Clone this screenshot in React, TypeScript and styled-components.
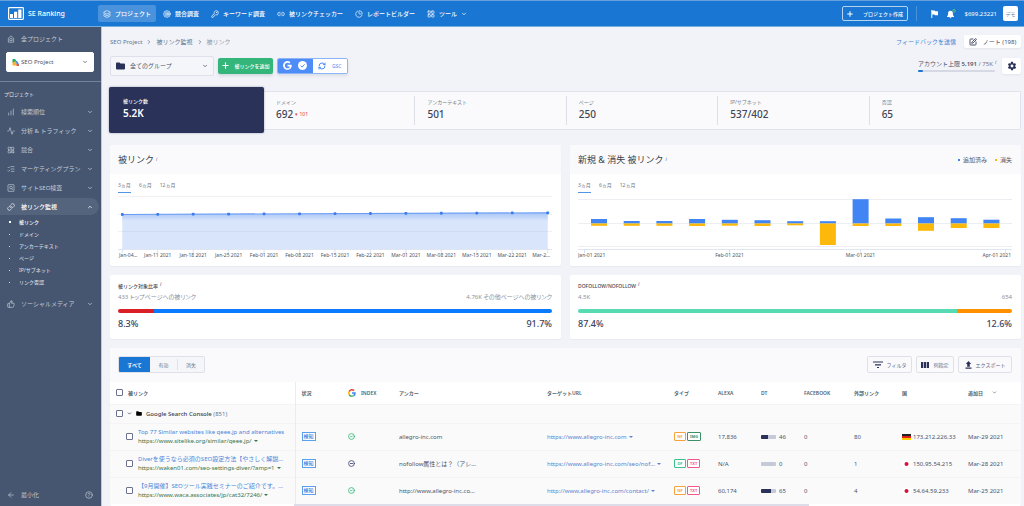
import React from 'react';
import styled, { createGlobalStyle, css } from 'styled-components';
import {
  Layers, Target, Link as LinkIcon, PieChart, LayoutGrid, ChevronDown, ChevronUp, ChevronRight, Plus,
  KeyRound, ChartNoAxesColumnIncreasing, Activity, ListChecks, Link2, ThumbsUp, ArrowLeft, CircleHelp,
  RefreshCw, SquarePen, CircleCheck, CircleMinus, Atom,
} from 'lucide-react';

const Global = createGlobalStyle`
  *, *::before, *::after { box-sizing: border-box; }
  body {
    margin: 0;
    background: #f2f3f8;
    color: #4a5468;
    font: 6px/8px "Noto Sans", "Noto Sans CJK JP", sans-serif;
  }
  button, input, select { font: inherit; color: inherit; margin: 0; padding: 0; }
  button { cursor: pointer; border: 0; background: none; }
  a { color: inherit; text-decoration: none; }
  ul { list-style: none; margin: 0; padding: 0; }
  h1, h2, h3, p, dl, dd, dt { margin: 0; font-weight: 400; }
  svg { flex: none; display: block; }
`;

/* ---------- top bar ---------- */
const TopBar = styled.header`
  display: flex;
  align-items: center;
  height: 27px;
  padding: 0 6px 0 8px;
  background: #1976d2;
  border-top: 1px solid #65a0dc;
  border-bottom: 1px solid #75acde;
  color: #fff;
`;
const Brand = styled.a`
  display: flex;
  align-items: center;
  gap: 4px;
  width: 90px;
  font-size: 7px;
  font-weight: 500;
`;
const TopNav = styled.nav`
  display: flex;
  gap: 2px;
  flex: 1;
`;
const TopLink = styled.a<{ $active?: boolean }>`
  display: flex;
  align-items: center;
  gap: 4px;
  height: 17px;
  padding: 0 5px;
  border-radius: 2px;
  white-space: nowrap;
  font-weight: 500;
  background: ${p => (p.$active ? '#4a92dc' : 'transparent')};
`;
const CreateButton = styled.button`
  display: flex;
  align-items: center;
  justify-content: center;
  gap: 9px;
  width: 66px;
  height: 15px;
  border: 1px solid #b6d3f1;
  border-radius: 2px;
  color: #fff;
  font-size: 5px;
  font-weight: 500;
`;
const TopTools = styled.div`
  display: flex;
  align-items: center;
  gap: 9px;
  height: 15px;
  margin-left: 8px;
  padding-left: 14px;
  border-left: 1px solid #4d92d9;
`;
const Avatar = styled.button`
  width: 15px;
  height: 15px;
  margin-left: -3px;
  border-radius: 2px;
  background: #fff;
  color: #5d86b5;
  font-size: 5px;
`;
const IconButton = styled.button`
  color: #fff;
`;

/* ---------- side bar ---------- */
const Shell = styled.div`
  display: flex;
  min-height: calc(100vh - 27px);
`;
const Side = styled.aside`
  display: flex;
  flex-direction: column;
  flex: 0 0 102px;
  background: #465670;
  border-right: 1px solid #c3c8d2;
  color: #c4cbd6;
`;
const SideTop = styled.div`
  display: flex;
  flex-direction: column;
  gap: 9px;
  padding: 8px 7px 9px 6px;
  border-bottom: 1px solid #74819a;
`;
const AllProjects = styled.a`
  display: flex;
  align-items: center;
  gap: 6px;
  padding-left: 1px;
`;
const SelectBox = styled.label<{ $w?: number; $soft?: boolean }>`
  display: flex;
  align-items: center;
  gap: ${p => (p.$soft ? 5 : 2)}px;
  height: 20px;
  width: ${p => (p.$w ? `${p.$w}px` : 'auto')};
  padding: 0 5px;
  border-radius: 2px;
  background: ${p => (p.$soft ? '#f5f6fa' : '#fff')};
  border: 1px solid ${p => (p.$soft ? '#dfe1ea' : '#fff')};
  color: #4a5468;
  select {
    flex: 1;
    min-width: 0;
    appearance: none;
    border: 0;
    outline: 0;
    background: transparent;
  }
`;
const SideLabel = styled.h2`
  padding: 8px 4px 5px;
  font-size: 5px;
  color: #e3e7ee;
`;
const SideItem = styled.button<{ $active?: boolean }>`
  display: flex;
  align-items: center;
  gap: 6px;
  width: 99px;
  height: 17px;
  margin-bottom: 2px;
  padding: 0 6px 0 7px;
  border-radius: 0 9px 9px 0;
  text-align: left;
  white-space: nowrap;
  background: ${p => (p.$active ? '#55647d' : 'transparent')};
  color: ${p => (p.$active ? '#fff' : 'inherit')};
  font-weight: ${p => (p.$active ? 500 : 400)};
  span { flex: 1; }
`;
const SubList = styled.ul`
  margin: -1px 0 7px;
`;
const SubItem = styled.li<{ $active?: boolean }>`
  display: flex;
  align-items: center;
  gap: 8px;
  height: 12px;
  padding-left: 9px;
  font-size: 5px;
  font-weight: 500;
  color: ${p => (p.$active ? '#fff' : '#d3d8e0')};
  &::before {
    content: '';
    width: ${p => (p.$active ? 2 : 1)}px;
    height: ${p => (p.$active ? 2 : 1)}px;
    margin-right: ${p => (p.$active ? 0 : 1)}px;
    background: currentColor;
  }
`;
const SideFoot = styled.div`
  display: flex;
  align-items: center;
  justify-content: space-between;
  margin-top: auto;
  padding: 7px 8px 7px 7px;
  button { display: flex; align-items: center; gap: 6px; }
`;

/* ---------- content head ---------- */
const Main = styled.main`
  flex: 1;
  min-width: 0;
  display: flex;
  flex-direction: column;
  padding: 8px 3px 0 8px;
`;
const HeadRow = styled.div<{ $h: number }>`
  display: flex;
  align-items: center;
  justify-content: space-between;
  height: ${p => p.$h}px;
`;
const Crumbs = styled.nav`
  display: flex;
  align-items: center;
  gap: 4px;
  color: #5d7390;
  > :last-child { color: #8c98a6; }
`;
const Cluster = styled.div<{ $gap: number }>`
  display: flex;
  align-items: center;
  gap: ${p => p.$gap}px;
`;
const Feedback = styled.a`
  color: #3a86d4;
`;
const WhiteButton = styled.button<{ $w: number; $h: number }>`
  display: flex;
  align-items: center;
  justify-content: center;
  gap: 6px;
  width: ${p => p.$w}px;
  height: ${p => p.$h}px;
  border-radius: 2px;
  background: #fff;
  box-shadow: 0 1px 2px rgba(40, 50, 90, 0.08);
`;
const GreenButton = styled.button`
  display: flex;
  align-items: center;
  justify-content: center;
  gap: 4px;
  width: 55px;
  height: 16px;
  border-radius: 2px;
  background: #34b67a;
  color: #fff;
  font-size: 5px;
  font-weight: 500;
  white-space: nowrap;
  box-shadow: 0 2px 3px rgba(40, 50, 90, 0.14);
`;
const GscGroup = styled.div`
  display: flex;
  width: 71px;
  height: 16px;
  border: 1px solid #8db4f8;
  border-radius: 2px;
  overflow: hidden;
  background: #fff;
  box-shadow: 0 2px 3px rgba(40, 50, 90, 0.1);
`;
const GscButton = styled.button<{ $on?: boolean }>`
  display: flex;
  flex: 1;
  align-items: center;
  justify-content: center;
  gap: 6px;
  background: ${p => (p.$on ? '#4e8cf8' : '#fff')};
  color: ${p => (p.$on ? '#fff' : '#4e8cf8')};
  font-size: 5px;
`;
const Limit = styled.div`
  display: flex;
  flex-direction: column;
  gap: 2px;
  width: 80px;
  white-space: nowrap;
  b { font-weight: 600; }
  small { font-size: 6px; color: #6e7686; }
`;
const Track = styled.div`
  width: 77px;
  height: 2px;
  border-radius: 1px;
  background: #d6d8e3;
`;
const Fill = styled.div`
  height: 100%;
  border-radius: 1px;
  background: #1976d2;
`;
const Info = styled.sup`
  margin-left: 2px;
  font-size: 5px;
  line-height: 5px;
  font-style: italic;
  vertical-align: 2px;
  color: #5d7390;
`;

/* ---------- metric strip ---------- */
const Metrics = styled.dl`
  display: flex;
  align-items: center;
  margin: 4px 0 12px -1px;
`;
const LeadMetric = styled.div`
  flex: 0 0 155px;
  height: 46px;
  padding: 10px 14px;
  border-radius: 2px;
  background: #2b3259;
  color: #fff;
  box-shadow: 0 0 2px rgba(43, 50, 89, 0.5);
  z-index: 1;
`;
const MetricStrip = styled.div`
  display: flex;
  flex: 1;
  height: 39px;
  padding: 4px 0;
  border: 1px solid #e1e3ec;
  border-left: 0;
  border-radius: 0 2px 2px 0;
  background: #fafafc;
`;
const MetricCell = styled.div`
  flex: 1;
  padding: 2px 0 0 12px;
  & + & { border-left: 1px solid #dcdee8; }
`;
const MetricName = styled.dt<{ $lead?: boolean }>`
  font-size: 5px;
  line-height: 8px;
  font-weight: ${p => (p.$lead ? 500 : 400)};
  color: ${p => (p.$lead ? '#fff' : '#737b88')};
`;
const MetricValue = styled.dd<{ $lead?: boolean }>`
  font-size: 10px;
  line-height: 16px;
  font-weight: ${p => (p.$lead ? 600 : 500)};
  color: ${p => (p.$lead ? '#fff' : '#3f4654')};
  small {
    margin-left: 2px;
    font-size: 5px;
    font-weight: 400;
    vertical-align: 2px;
    color: #e0393e;
  }
`;

/* ---------- cards ---------- */
const CardGrid = styled.div`
  display: grid;
  grid-template-columns: 1fr 1fr;
  gap: 9px;
  margin-bottom: 9px;
`;
const Card = styled.section`
  min-width: 0;
  border-radius: 2px;
  background: #fff;
  overflow: hidden;
  box-shadow: 0 1px 1px rgba(40, 50, 90, 0.05);
`;
const CardHead = styled.div`
  display: flex;
  align-items: center;
  justify-content: space-between;
  height: 29px;
  padding: 0 9px 0 8px;
  background: #fafafc;
`;
const CardTitle = styled.h2`
  font-size: 9px;
  line-height: 12px;
  color: #3a3f4a;
`;
const LegendItem = styled.span<{ $c: string }>`
  display: flex;
  align-items: center;
  gap: 3px;
  &::before {
    content: '';
    width: 2px;
    height: 2px;
    background: ${p => p.$c};
  }
`;
const Periods = styled.div`
  display: flex;
  gap: 8px;
  height: 19px;
  padding: 6px 8px 0;
`;
const Period = styled.button<{ $active?: boolean }>`
  height: 13px;
  padding-bottom: 3px;
  font-size: 5px;
  border-bottom: 1px solid ${p => (p.$active ? '#4f95e2' : 'transparent')};
  color: #6e7686;
`;
const Plot = styled.svg`
  width: calc(100% - 17px);
  height: auto;
  margin: 0 9px 4px 8px;
`;

const RatioCard = styled(Card)`
  display: flex;
  flex-direction: column;
  height: 64px;
  padding: 6px 9px 0 8px;
`;
const RatioTitle = styled.h3`
  font-size: 5px;
  line-height: 10px;
  font-weight: 500;
  color: #3f4654;
`;
const Spread = styled.div<{ $big?: boolean }>`
  display: flex;
  justify-content: space-between;
  ${p => p.$big
    ? css`font-size: 9px; line-height: 12px; font-weight: 500; color: #394260;`
    : css`font-size: 6px; line-height: 12px; color: #8a919d; font-feature-settings: 'palt';`}
`;
const RatioBar = styled.div`
  display: flex;
  height: 4px;
  margin: 6px 0 5px;
  border-radius: 2px;
  overflow: hidden;
`;
const RatioPart = styled.div<{ $c: string }>`
  background: ${p => p.$c};
`;

/* ---------- table ---------- */
const TableCard = styled(Card)`
  flex: 1;
`;
const TableTools = styled.div`
  display: flex;
  align-items: center;
  justify-content: space-between;
  height: 34px;
  padding: 0 9px 1px 8px;
  background: #fafafc;
`;
const Segments = styled.div`
  display: flex;
  align-items: center;
  height: 17px;
  border: 1px solid #dfe1ea;
  border-radius: 2px;
  overflow: hidden;
  background: #f5f6fa;
`;
const Segment = styled.button<{ $active?: boolean }>`
  width: ${p => (p.$active ? 31 : 27)}px;
  height: ${p => (p.$active ? 17 : 11)}px;
  font-size: 5px;
  font-weight: ${p => (p.$active ? 700 : 400)};
  background: ${p => (p.$active ? '#1976d2' : 'transparent')};
  color: ${p => (p.$active ? '#fff' : '#6e7686')};
  &:last-child { border-left: 1px solid #dfe1ea; }
`;
const OutlineButton = styled.button<{ $w: number }>`
  display: flex;
  align-items: center;
  justify-content: center;
  gap: 4px;
  width: ${p => p.$w}px;
  height: 17px;
  border: 1px solid #dfe1ea;
  border-radius: 2px;
  font-size: 5px;
  color: #59627a;
  white-space: nowrap;
`;
const Table = styled.table`
  width: 100%;
  table-layout: fixed;
  border-collapse: collapse;
  background: #fafafb;
  th, td {
    padding: 0 0 0 6px;
    text-align: left;
    white-space: nowrap;
    overflow: hidden;
    vertical-align: middle;
  }
  thead tr { height: 22px; background: #fff; }
  th { font-size: 5px; font-weight: 600; color: #4d6470; }
  tbody tr { height: 27px; border-top: 1px solid #f4f4f7; }
  th:first-child, td:first-child { border-right: 1px solid #ebecf3; }
`;
const GroupRow = styled.tr`
  && { height: 19px; }
`;
const Check = styled.input`
  appearance: none;
  flex: none;
  width: 7px;
  height: 7px;
  border: 1px solid #6c7190;
  border-radius: 1px;
  background: #fff;
`;
const Inline = styled.div<{ $gap?: number; $in?: number }>`
  display: flex;
  align-items: center;
  gap: ${p => p.$gap ?? 4}px;
  padding-left: ${p => p.$in ?? 0}px;
`;
const LinkPair = styled.div`
  display: flex;
  flex-direction: column;
  width: 148px;
`;
const PageTitle = styled.a`
  overflow: hidden;
  text-overflow: ellipsis;
  line-height: 9px;
  color: #4a86d8;
`;
const PageUrl = styled.a`
  display: flex;
  align-items: center;
  gap: 2px;
  line-height: 9px;
  color: #37754a;
`;
const TargetUrl = styled.a`
  display: flex;
  align-items: center;
  gap: 2px;
  color: #5a83cf;
`;
const Caret = styled.i`
  flex: none;
  border: 2px solid transparent;
  border-top-color: currentColor;
  border-bottom: 0;
`;
const Tag = styled.span<{ $c: string }>`
  display: inline-block;
  min-width: 12px;
  height: 9px;
  padding: 0 2px;
  border: 1px solid ${p => p.$c};
  border-radius: 1px;
  background: #fff;
  font-size: 4px;
  line-height: 7px;
  font-weight: 700;
  text-align: center;
  color: ${p => p.$c};
`;
const Status = styled.span`
  display: inline-block;
  width: 14px;
  height: 9px;
  border: 1px solid #5ba0ea;
  background: #fff;
  font-size: 5px;
  line-height: 7px;
  font-weight: 500;
  text-align: center;
  color: #2f80dc;
`;
const Meter = styled.span`
  width: 15px;
  height: 4px;
  border-radius: 1px;
  overflow: hidden;
  background: #c6c9d8;
`;
const MeterFill = styled.span`
  display: block;
  height: 100%;
  background: #2b3259;
`;
const GroupName = styled.span`
  color: #6e7686;
  b { font-weight: 500; color: #3a3f4a; }
`;
const Scroller = styled.div`
  height: 2px;
  margin: 0 212px 0 184px;
  background: #dcdde8;
`;

/* ---------- drawings ---------- */
const Logo = () => (
  <svg width="16" height="13" viewBox="0 0 16 13">
    <rect x="0.6" y="0.6" width="14.8" height="11.8" rx="0.8" fill="none" stroke="#fff" strokeWidth="1.2" />
    <path d="M2 7h3v4H2zM6 4.800h3.200V11H6zM10.200 2.500h3.300V11h-3.300z" fill="#fff" />
  </svg>
);
const HomeIcon = () => (
  <svg width="8" height="8" viewBox="0 0 24 24" fill="none" stroke="currentColor" strokeWidth="2">
    <path d="M4 9.500l8-7 8 7V21.500H4z" strokeLinejoin="round" />
    <path d="M8.500 17v-4a3.500 3.500 0 0 1 7 0v4z" />
  </svg>
);
const AuditIcon = () => (
  <svg width="8" height="8" viewBox="0 0 24 24" fill="none" stroke="currentColor" strokeWidth="2">
    <rect x="3" y="2" width="18" height="20" rx="1" />
    <circle cx="12" cy="11" r="4" />
    <path d="M14.500 14l3 3.500" />
  </svg>
);
const GMark = ({ size, mono }: { size: number; mono?: boolean }) => {
  const c = mono ? ['#fff', '#fff', '#fff', '#fff'] : ['#4285f4', '#34a853', '#fbbc05', '#ea4335'];
  return (
    <svg width={size} height={size} viewBox="0 0 48 48">
      <path fill={c[0]} d="M46 20H24v9h12.500c-1 4-3.500 6.500-5.500 8l7.500 6C43.500 38.500 46.500 32 46.500 24.500c0-1.500-.2-3-.5-4.500z" />
      <path fill={c[1]} d="M24 47c6 0 11-2 14.500-4.500L31 37c-2 1.200-4.300 2-7 2-6 0-11-4-12.600-9.500L3.500 35.500C7.500 42.500 15 47 24 47z" />
      <path fill={c[2]} d="M11.400 29.500a14 14 0 0 1 0-11L3.500 12.500a23 23 0 0 0 0 23z" />
      <path fill={c[3]} d="M24 9.500c3.500 0 6.500 1.200 9 3.500l6.500-6.500A23 23 0 0 0 3.500 12.500l7.900 6C13 13.500 18 9.500 24 9.500z" />
    </svg>
  );
};
const CheckDisc = () => (
  <svg width="9" height="9" viewBox="0 0 9 9">
    <circle cx="4.5" cy="4.500" r="4.500" fill="#fff" />
    <path d="M2.500 4.600l1.500 1.500 2.600-2.800" fill="none" stroke="#4e8cf8" strokeWidth="1" />
  </svg>
);
const FolderIcon = ({ w, c }: { w: number; c: string }) => (
  <svg width={w} height={w - 1} viewBox="0 0 9 8">
    <path d="M0 1.500A1 1 0 0 1 1 .5h2.500l1 1H8a1 1 0 0 1 1 1V6.500a1 1 0 0 1-1 1H1a1 1 0 0 1-1-1z" fill={c} />
  </svg>
);
const Favicon = () => (
  <svg width="7" height="7" viewBox="0 0 7 7">
    <path d="M.5 0h2.500l2 3-4.500 1z" fill="#25a86b" />
    <path d="M.5 3.500L3.500 2 5 6.500H.5z" fill="#f6b32c" />
    <path d="M4.500 4.500L7 5v2H4.500z" fill="#e8573c" />
    <path d="M3.500 1.500l2 1 1.500 3-2.500-.8z" fill="#3f8be8" />
  </svg>
);
const Flag = () => (
  <svg width="7" height="8" viewBox="0 0 7 8">
    <path d="M.3 0h1v.6H3.800l.4.700H7v4H3.800l-.4-.8H1.300V8h-1z" fill="#fff" />
  </svg>
);
const Bell = () => (
  <svg width="9" height="10" viewBox="0 0 9 10">
    <path d="M3.500 1.800c1.700 0 2.400 1.200 2.400 2.600 0 1.600.4 2.300 1.100 3v.5H0v-.5c.7-.7 1.100-1.400 1.100-3C1.100 3 1.800 1.800 3.500 1.800zM2.500 8.300h2a1 1 0 0 1-2 0z" fill="#fff" />
    <circle cx="7" cy="1.800" r="1.300" fill="#1976d2" stroke="#67c56f" strokeWidth=".9" />
  </svg>
);
const Gear = () => (
  <svg width="10" height="10" viewBox="0 0 24 24">
    <path fill="#2b3259" d="M19.400 13a7.500 7.500 0 0 0 0-2l2.100-1.600a.5.5 0 0 0 .1-.6l-2-3.500a.5.5 0 0 0-.6-.2l-2.500 1a7.300 7.300 0 0 0-1.700-1l-.4-2.600a.5.500 0 0 0-.5-.5h-4a.5.500 0 0 0-.5.5L9.200 5.100a7.300 7.300 0 0 0-1.700 1L5 5.100a.5.500 0 0 0-.6.200l-2 3.500a.5.500 0 0 0 .1.600L4.600 11a7.500 7.500 0 0 0 0 2l-2.100 1.600a.5.500 0 0 0-.1.600l2 3.500c.1.200.4.300.6.200l2.500-1c.5.400 1.100.7 1.700 1l.4 2.600c0 .3.200.5.500.5h4c.3 0 .5-.2.500-.5l.4-2.600c.6-.3 1.200-.6 1.700-1l2.500 1c.2.100.5 0 .6-.2l2-3.500a.5.500 0 0 0-.1-.6zM12 15.500a3.500 3.500 0 1 1 0-7 3.500 3.500 0 0 1 0 7z" />
  </svg>
);
const FilterIcon = () => (
  <svg width="10" height="8" viewBox="0 0 10 8">
    <path d="M0 1h10M2 3.800h6M4 6.500h2" stroke="#2b3259" strokeWidth="1.200" />
  </svg>
);
const ColumnsIcon = () => (
  <svg width="8" height="6" viewBox="0 0 8 6">
    <path d="M0 0h2.200v6H0zM2.900 0h2.200v6H2.900zM5.800 0H8v6H5.800z" fill="#2b3259" />
  </svg>
);
const UploadIcon = () => (
  <svg width="7" height="8" viewBox="0 0 7 8">
    <path d="M3.500 0l2.700 3H4.800v2.700H2.200V3H.8zM.5 6.500h6v1.200h-6z" fill="#2b3259" />
  </svg>
);
const Germany = () => (
  <svg width="9" height="6" viewBox="0 0 9 6">
    <path fill="#222" d="M0 0h9v2H0z" /><path fill="#e02020" d="M0 2h9v2H0z" /><path fill="#fc0" d="M0 4h9v2H0z" />
  </svg>
);
const Japan = () => (
  <svg width="9" height="6" viewBox="0 0 9 6">
    <path fill="#fff" d="M0 0h9v6H0z" /><circle cx="4.500" cy="3" r="2" fill="#d8103c" />
  </svg>
);

const lineDates = ['Jan-04…', 'Jan-11 2021', 'Jan-18 2021', 'Jan-25 2021', 'Feb-01 2021', 'Feb-08 2021',
  'Feb-15 2021', 'Feb-22 2021', 'Mar-01 2021', 'Mar-08 2021', 'Mar-15 2021', 'Mar-22 2021', 'Mar-2…'];
const px = (i: number) => 4.300 + i * 35.450;
const py = (i: number) => 21.500 - i * 0.140;

const LineChart = () => (
  <Plot viewBox="0 0 434 69" role="img" aria-label="被リンク">
    <defs>
      <linearGradient id="glow" x1="0" y1="0" x2="0" y2="1">
        <stop offset="0" stopColor="#a9c6f8" /><stop offset="1" stopColor="#d9e5fb" />
      </linearGradient>
    </defs>
    {[3.500, 21.500, 38.500].map(y => <path key={y} d={`M0 ${y}H434`} stroke="#f0f1f4" />)}
    <path d={`M${px(0)} ${py(0)}L${px(12)} ${py(12)}V56.500H${px(0)}z`} fill="#d9e5fb" />
    <path d={`M${px(0)} ${py(0)}L${px(12)} ${py(12)}V28H${px(0)}z`} fill="url(#glow)" />
    <path d={`M${px(0)} 38.500H${px(12)}`} stroke="#cfdcf4" />
    <path d="M0 56.500H434" stroke="#dfe6f1" />
    <path d={`M${px(0)} ${py(0)}L${px(12)} ${py(12)}`} stroke="#6b9df3" strokeWidth="1.200" />
    {lineDates.map((d, i) => (
      <g key={d}>
        <path d={`M${px(i)} 56v4`} stroke="#cfdcf0" strokeWidth=".8" />
        <rect x={px(i) - 1.400} y={py(i) - 1.400} width="2.800" height="2.800" rx=".8" fill="#3c7cec" />
        <text x={i === 0 ? 1 : i === 12 ? 432 : px(i)} y="64" fontSize="5" fill="#4c5460"
          textAnchor={i === 0 ? 'start' : i === 12 ? 'end' : 'middle'}>{d}</text>
      </g>
    ))}
  </Plot>
);

const ups = [4.500, 2.500, 2.500, 4.500, 3.700, 3.300, 2.300, 2.300, 24.300, 5, 6.300, 5.300, 3.800];
const downs = [2.300, 2.300, 2.300, 2.500, 2.200, 2.500, 1.800, 21.500, 2.500, 2.500, 7.300, 4.500, 4.500];
const barTicks = [
  { x: 6.500, tx: 0, a: 'start', t: 'Jan-01 2021' },
  { x: 151.500, tx: 151.500, a: 'middle', t: 'Feb-01 2021' },
  { x: 282.500, tx: 282.500, a: 'middle', t: 'Mar-01 2021' },
  { x: 427.500, tx: 433, a: 'end', t: 'Apr-01 2021' },
] as const;

const BarChart = () => (
  <Plot viewBox="0 0 434 69" role="img" aria-label="新規 & 消失 被リンク">
    {[6.500, 30.500, 53.500].map(y => <path key={y} d={`M0 ${y}H434`} stroke="#eceef1" />)}
    <path d="M0 56.500H434" stroke="#dfe6f1" />
    {ups.map((u, i) => (
      <g key={i}>
        <rect x={13 + i * 32.700} y={30.500 - u} width="16" height={u} fill="#4184f3" />
        <rect x={13 + i * 32.700} y="30.500" width="16" height={downs[i]} fill="#fdb90b" />
      </g>
    ))}
    {barTicks.map(b => (
      <g key={b.t}>
        <path d={`M${b.x} 56v4`} stroke="#cfdcf0" strokeWidth=".8" />
        <text x={b.tx} y="64" fontSize="5" fill="#4c5460" textAnchor={b.a}>{b.t}</text>
      </g>
    ))}
  </Plot>
);

/* ---------- data ---------- */
const topLinks = [
  { icon: Layers, t: 'プロジェクト', active: true },
  { icon: Target, t: '競合調査' },
  { icon: KeyRound, t: 'キーワード調査' },
  { icon: Link2, t: '被リンクチェッカー' },
  { icon: PieChart, t: 'レポートビルダー' },
  { icon: LayoutGrid, t: 'ツール', menu: true },
];
const sideItems = [
  { icon: <ChartNoAxesColumnIncreasing size={8} />, t: '検索順位' },
  { icon: <Activity size={8} />, t: '分析 & トラフィック' },
  { icon: <Atom size={8} />, t: '競合' },
  { icon: <ListChecks size={8} />, t: 'マーケティングプラン' },
  { icon: <AuditIcon />, t: 'サイトSEO検査' },
];
const subItems = ['被リンク', 'ドメイン', 'アンカーテキスト', 'ページ', 'IP/サブネット', 'リンク否認'];
const metrics = [
  { n: 'ドメイン', v: '692', drop: '101' },
  { n: 'アンカーテキスト', v: '501' },
  { n: 'ページ', v: '250' },
  { n: 'IP/サブネット', v: '537/402' },
  { n: '否認', v: '65' },
];
const cols = [185, 47, 51, 148, 0, 44, 43, 43, 50, 48, 66, 59];
const NF = '#f9a13c';
const PINK = '#f4578f';
const rows = [
  { title: 'Top 77 Similar websites like qeee.jp and alternatives', url: 'https://www.sitelike.org/similar/qeee.jp/', ok: true,
    anchor: 'allegro-inc.com', target: 'https://www.allegro-inc.com', tags: [['NF', NF], ['IMG', '#3f8f68']],
    alexa: '17,836', dt: 46, fb: 0, out: 80, de: true, ip: '173.212.226.33', date: 'Mar-29 2021' },
  { title: 'Diverを使うなら必須のSEO設定方法【やさしく解説…', url: 'https://waken01.com/seo-settings-diver/?amp=1', ok: false,
    anchor: 'nofollow属性とは？（アレ…', target: 'https://www.allegro-inc.com/seo/nof…', tags: [['DF', '#3cc28c'], ['TXT', PINK]],
    alexa: 'N/A', dt: 0, fb: 0, out: 1, de: false, ip: '150.95.54.215', date: 'Mar-28 2021' },
  { title: '【9月開催】SEOツール実践セミナーのご紹介です。…', url: 'https://www.waca.associates/jp/cat32/7246/', ok: true,
    anchor: 'http://www.allegro-inc.co…', target: 'http://www.allegro-inc.com/contact/', tags: [['NF', NF], ['TXT', PINK]],
    alexa: '60,174', dt: 65, fb: 0, out: 4, de: false, ip: '54.64.59.233', date: 'Mar-25 2021' },
];

const PeriodTabs = () => (
  <Periods>
    <Period $active>3ヵ月</Period>
    <Period>6ヵ月</Period>
    <Period>12ヵ月</Period>
  </Periods>
);

type RatioProps = { title: string; left: string; right: string; share: number; colors: [string, string] };
const Ratio = ({ title, left, right, share, colors }: RatioProps) => (
  <RatioCard>
    <RatioTitle>{title}<Info>i</Info></RatioTitle>
    <Spread><span>{left}</span><span>{right}</span></Spread>
    <RatioBar>
      <RatioPart $c={colors[0]} style={{ width: `${share}%` }} />
      <RatioPart $c={colors[1]} style={{ width: `${100 - share}%` }} />
    </RatioBar>
    <Spread $big><span>{share.toFixed(1)}%</span><span>{(100 - share).toFixed(1)}%</span></Spread>
  </RatioCard>
);

export default function App() {
  return (
    <>
      <Global />
      <TopBar>
        <Brand href="#"><Logo />SE Ranking</Brand>
        <TopNav>
          {topLinks.map(({ icon: Icon, t, active, menu }) => (
            <TopLink key={t} href="#" $active={active}>
              <Icon size={8} />{t}{menu && <ChevronDown size={6} strokeWidth={3} />}
            </TopLink>
          ))}
        </TopNav>
        <CreateButton><Plus size={8} strokeWidth={3} />プロジェクト作成</CreateButton>
        <TopTools>
          <IconButton aria-label="お知らせ"><Flag /></IconButton>
          <IconButton aria-label="通知"><Bell /></IconButton>
          <span>$699.23221</span>
          <Avatar>デモ</Avatar>
        </TopTools>
      </TopBar>
      <Shell>
        <Side>
          <SideTop>
            <AllProjects href="#"><HomeIcon />全プロジェクト</AllProjects>
            <SelectBox>
              <Favicon />
              <select aria-label="プロジェクト"><option>SEO Project</option></select>
              <ChevronDown size={6} strokeWidth={3} />
            </SelectBox>
          </SideTop>
          <SideLabel>プロジェクト</SideLabel>
          {sideItems.map(({ icon, t }) => (
            <SideItem key={t}>{icon}<span>{t}</span><ChevronDown size={6} strokeWidth={3} /></SideItem>
          ))}
          <SideItem $active><LinkIcon size={8} /><span>被リンク監視</span><ChevronUp size={6} strokeWidth={3} /></SideItem>
          <SubList>
            {subItems.map((t, i) => <SubItem key={t} $active={i === 0}><a href="#">{t}</a></SubItem>)}
          </SubList>
          <SideItem><ThumbsUp size={8} /><span>ソーシャルメディア</span><ChevronDown size={6} strokeWidth={3} /></SideItem>
          <SideFoot>
            <button><ArrowLeft size={8} />最小化</button>
            <button aria-label="ヘルプ"><CircleHelp size={8} /></button>
          </SideFoot>
        </Side>
        <Main>
          <HeadRow $h={13}>
            <Crumbs>
              <a href="#">SEO Project</a><ChevronRight size={6} strokeWidth={3} />
              <a href="#">被リンク監視</a><ChevronRight size={6} strokeWidth={3} />
              <span>被リンク</span>
            </Crumbs>
            <Cluster $gap={8}>
              <Feedback href="#">フィードバックを送信</Feedback>
              <WhiteButton $w={57} $h={13}><SquarePen size={8} strokeWidth={3} />ノート (198)</WhiteButton>
            </Cluster>
          </HeadRow>
          <HeadRow $h={35}>
            <Cluster $gap={4}>
              <SelectBox $w={104} $soft>
                <FolderIcon w={9} c="#2b3259" />
                <select aria-label="グループ"><option>全てのグループ</option></select>
                <ChevronDown size={6} strokeWidth={3} />
              </SelectBox>
              <GreenButton><Plus size={9} strokeWidth={3} />被リンクを追加</GreenButton>
              <GscGroup>
                <GscButton $on aria-label="Google"><GMark size={9} mono /><CheckDisc /></GscButton>
                <GscButton><RefreshCw size={8} strokeWidth={3} />GSC</GscButton>
              </GscGroup>
            </Cluster>
            <Cluster $gap={4}>
              <Limit>
                <span>アカウント上限 <b>5,191</b> <small>/ 75K</small><Info>i</Info></span>
                <Track><Fill style={{ width: `${(5191 / 75000) * 100}%` }} /></Track>
              </Limit>
              <WhiteButton $w={19} $h={16} aria-label="設定"><Gear /></WhiteButton>
            </Cluster>
          </HeadRow>
          <Metrics>
            <LeadMetric>
              <MetricName $lead>被リンク数</MetricName>
              <MetricValue $lead>5.2K</MetricValue>
            </LeadMetric>
            <MetricStrip>
              {metrics.map(m => (
                <MetricCell key={m.n}>
                  <MetricName>{m.n}</MetricName>
                  <MetricValue>{m.v}{m.drop && <small>▾ {m.drop}</small>}</MetricValue>
                </MetricCell>
              ))}
            </MetricStrip>
          </Metrics>
          <CardGrid>
            <Card>
              <CardHead><CardTitle>被リンク<Info>i</Info></CardTitle></CardHead>
              <PeriodTabs />
              <LineChart />
            </Card>
            <Card>
              <CardHead>
                <CardTitle>新規 &amp; 消失 被リンク<Info>i</Info></CardTitle>
                <Cluster $gap={8}>
                  <LegendItem $c="#4184f3">追加済み</LegendItem>
                  <LegendItem $c="#fdb90b">消失</LegendItem>
                </Cluster>
              </CardHead>
              <PeriodTabs />
              <BarChart />
            </Card>
            <Ratio title="被リンク対象比率" left="433 トップページへの被リンク" right="4.76K その他ページへの被リンク" share={8.3} colors={['#da1f26', '#0a7bff']} />
            <Ratio title="DOFOLLOW/NOFOLLOW" left="4.5K" right="654" share={87.4} colors={['#58dbb2', '#ff9100']} />
          </CardGrid>
          <TableCard>
            <TableTools>
              <Segments>
                <Segment $active>すべて</Segment>
                <Segment>有効</Segment>
                <Segment>消失</Segment>
              </Segments>
              <Cluster $gap={4}>
                <OutlineButton $w={45}><FilterIcon />フィルタ</OutlineButton>
                <OutlineButton $w={38}><ColumnsIcon />列指定</OutlineButton>
                <OutlineButton $w={54}><UploadIcon />エクスポート</OutlineButton>
              </Cluster>
            </TableTools>
            <Table>
              <colgroup>{cols.map((w, i) => <col key={i} width={w || undefined} />)}</colgroup>
              <thead>
                <tr>
                  <th><Inline $gap={5}><Check type="checkbox" aria-label="すべて選択" />被リンク</Inline></th>
                  <th>状況</th>
                  <th><Inline $gap={5}><GMark size={8} />INDEX</Inline></th>
                  <th>アンカー</th>
                  <th>ターゲットURL</th>
                  <th>タイプ</th>
                  <th>ALEXA</th>
                  <th>DT</th>
                  <th>FACEBOOK</th>
                  <th>外部リンク</th>
                  <th>国</th>
                  <th><Inline $gap={9}>追加日<ChevronDown size={5} strokeWidth={3} /></Inline></th>
                </tr>
              </thead>
              <tbody>
                <GroupRow>
                  <td>
                    <Inline>
                      <Check type="checkbox" aria-label="Google Search Console" />
                      <ChevronDown size={5} strokeWidth={4} />
                      <FolderIcon w={6} c="#000" />
                      <GroupName><b>Google Search Console</b> (851)</GroupName>
                    </Inline>
                  </td>
                  <td colSpan={11} />
                </GroupRow>
                {rows.map(r => (
                  <tr key={r.url}>
                    <td>
                      <Inline $gap={5} $in={10}>
                        <Check type="checkbox" aria-label={r.title} />
                        <LinkPair>
                          <PageTitle href="#">{r.title}</PageTitle>
                          <PageUrl href="#">{r.url}<Caret /></PageUrl>
                        </LinkPair>
                      </Inline>
                    </td>
                    <td><Status>検知</Status></td>
                    <td>{r.ok ? <CircleCheck size={7} strokeWidth={3} color="#3dba7f" /> : <CircleMinus size={7} strokeWidth={3} color="#4a4f78" />}</td>
                    <td>{r.anchor}</td>
                    <td><TargetUrl href="#">{r.target}<Caret /></TargetUrl></td>
                    <td><Inline $gap={1}>{r.tags.map(([t, c]) => <Tag key={t} $c={c}>{t}</Tag>)}</Inline></td>
                    <td>{r.alexa}</td>
                    <td><Inline $gap={3}><Meter><MeterFill style={{ width: `${r.dt}%` }} /></Meter>{r.dt}</Inline></td>
                    <td>{r.fb}</td>
                    <td>{r.out}</td>
                    <td><Inline $gap={2}>{r.de ? <Germany /> : <Japan />}{r.ip}</Inline></td>
                    <td>{r.date}</td>
                  </tr>
                ))}
              </tbody>
            </Table>
            <Scroller />
          </TableCard>
        </Main>
      </Shell>
    </>
  );
}
